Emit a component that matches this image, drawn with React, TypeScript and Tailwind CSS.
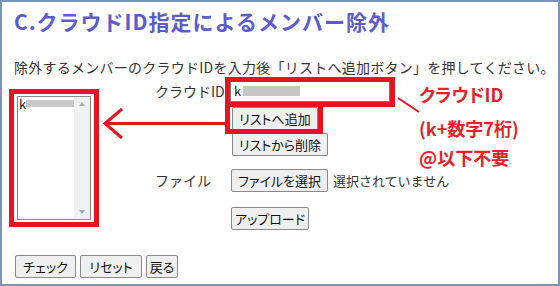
import React from "react";

const btn =
  "flex items-center justify-center h-[23px] bg-[#efefef] border border-[#8a8a8a] rounded-[2px] text-[13px] leading-none text-[#111] [font-feature-settings:'palt']";

export default function App() {
  return (
    <div className="relative w-[560px] h-[286px] bg-white border-2 border-[#7a94bb] overflow-hidden font-['Noto_Sans_CJK_JP',sans-serif] text-[#333]">
      <h1 className="pl-[12px] pt-[5px] text-[21px] leading-[28px] font-bold tracking-[1px] text-[#5c5cc9] whitespace-nowrap">
        C.クラウドID指定によるメンバー除外
      </h1>
      <p className="pl-[12px] mt-[22px] text-[14px] leading-[20px] tracking-[0.25px] whitespace-nowrap">
        除外するメンバーのクラウドIDを入力後「リストへ追加ボタン」を押してください。
      </p>

      <div className="flex items-start pl-[15px] mt-[4px]">
        {/* list box */}
        <div className="mt-[15px] w-[74px] h-[124px] border border-[#8b8b8b] flex bg-white">
          <div className="flex-1 relative">
            <span className="absolute left-[1px] top-[0px] text-[13px] leading-[14px] text-[#222]">k</span>
            <div className="absolute left-[8px] top-[3px] w-[48px] h-[7px] bg-[#c8c8c8]" />
          </div>
          <div className="w-[16px] bg-[#f0f0f0] flex flex-col items-center justify-between py-[5px]">
            <div className="w-0 h-0 border-l-[3px] border-r-[3px] border-b-[4px] border-l-transparent border-r-transparent border-b-[#a8a8a8]" />
            <div className="w-0 h-0 border-l-[3px] border-r-[3px] border-t-[4px] border-l-transparent border-r-transparent border-t-[#a8a8a8]" />
          </div>
        </div>

        {/* form */}
        <div className="ml-[64px] flex flex-col text-[14px]">
          <div className="flex items-center h-[21px]">
            <span className="w-[75px] leading-[21px]">クラウドID</span>
            <div className="relative w-[160px] h-[21px] border border-[#7a7a7a] bg-white">
              <span className="absolute left-[3px] top-[1px] text-[13px] leading-[16px] text-[#222]">k</span>
              <div className="absolute left-[12px] top-[4px] w-[57px] h-[10px] bg-[#c6c6c6]" />
            </div>
          </div>
          <div className="flex mt-[5px] pl-[77px]">
            <button className={`${btn} w-[86px]`}>リストへ追加</button>
          </div>
          <div className="flex mt-[3px] pl-[77px]">
            <button className={`${btn} w-[96px]`}>リストから削除</button>
          </div>
          <div className="flex items-center mt-[13px]">
            <span className="w-[76px] leading-[23px]">ファイル</span>
            <button className={`${btn} w-[97px]`}>ファイルを選択</button>
            <span className="ml-[5px] text-[13px] whitespace-nowrap text-[#333]">選択されていません</span>
          </div>
          <div className="flex mt-[15px] pl-[76px]">
            <button className={`${btn} w-[78px] h-[22px]`}>アップロード</button>
          </div>
        </div>
      </div>

      <div className="flex gap-[4px] pl-[13px] mt-[25px]">
        <button className={`${btn} w-[61px] h-[22px]`}>チェック</button>
        <button className={`${btn} w-[62px] h-[22px]`}>リセット</button>
        <button className={`${btn} w-[32px] h-[22px]`}>戻る</button>
      </div>

      {/* annotations */}
      <div className="absolute left-[7px] top-[87px] w-[90px] h-[138px] border-[5px] border-[#e6141e]" />
      <div className="absolute left-[223px] top-[75px] w-[170px] h-[30px] border-[5px] border-[#e6141e]" />
      <div className="absolute left-[223px] top-[100px] w-[98px] h-[32px] border-[5px] border-[#e6141e]" />
      <svg className="absolute left-0 top-0" width="560" height="286" viewBox="-2 -2 560 286">
        <line x1="100" y1="119.5" x2="226" y2="119.5" stroke="#e6141e" strokeWidth="3" />
        <polyline points="118,105 101,119.5 118,134" fill="none" stroke="#e6141e" strokeWidth="3" />
        <line x1="394" y1="94" x2="415" y2="108" stroke="#e6141e" strokeWidth="2" />
      </svg>
      <div className="absolute left-[417px] top-[82px] flex flex-col text-[18px] leading-[20px] font-bold text-[#e62129] [font-feature-settings:'palt']">
        <span>クラウドID</span>
        <span className="mt-[14px]">(k+数字7桁)</span>
        <span className="mt-[9px]">@以下不要</span>
      </div>
    </div>
  );
}
